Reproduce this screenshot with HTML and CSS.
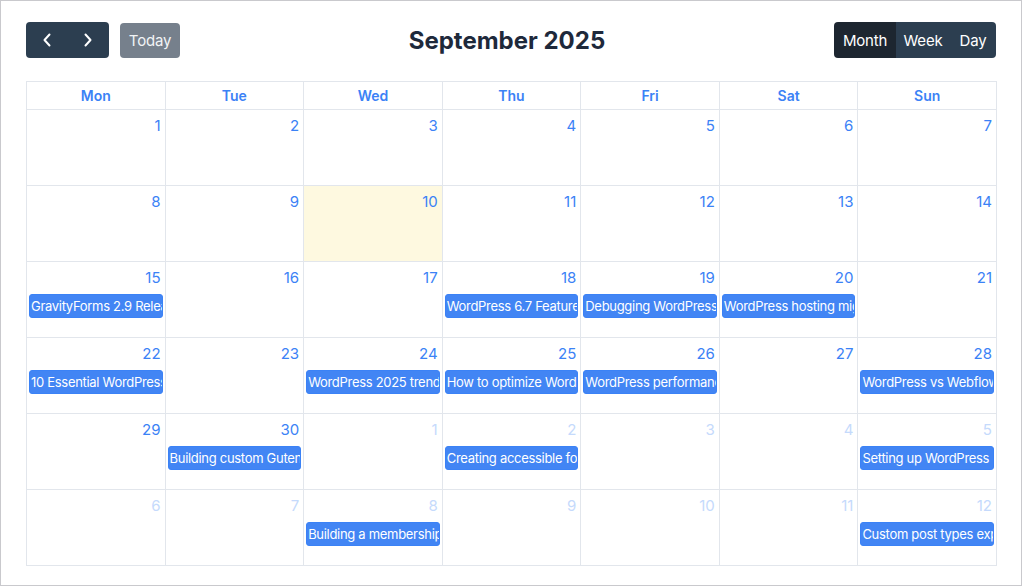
FILE: index.html
```html
<!DOCTYPE html>
<html lang="en">
<head>
<meta charset="utf-8">
<title>Calendar</title>
<link rel="stylesheet" href="styles.css">
</head>
<body>
<div class="frame">
  <div class="toolbar">
    <div class="left">
      <div class="btn-group">
        <button class="btn nav" aria-label="prev"><svg width="10" height="16" viewBox="0 0 10 16"><path d="M7.5 2.5 L2.5 8 L7.5 13.5" fill="none" stroke="#fff" stroke-width="2" stroke-linecap="round" stroke-linejoin="round"/></svg></button>
        <button class="btn nav" aria-label="next"><svg width="10" height="16" viewBox="0 0 10 16"><path d="M2.5 2.5 L7.5 8 L2.5 13.5" fill="none" stroke="#fff" stroke-width="2" stroke-linecap="round" stroke-linejoin="round"/></svg></button>
      </div>
      <button class="btn today">Today</button>
    </div>
    <h2 class="title">September 2025</h2>
    <div class="btn-group">
      <button class="btn view active">Month</button>
      <button class="btn view">Week</button>
      <button class="btn view">Day</button>
    </div>
  </div>
  <div class="grid">
    <div class="head">Mon</div><div class="head">Tue</div><div class="head">Wed</div><div class="head">Thu</div><div class="head">Fri</div><div class="head">Sat</div><div class="head">Sun</div>

    <div class="cell"><div class="num">1</div></div>
    <div class="cell"><div class="num">2</div></div>
    <div class="cell"><div class="num">3</div></div>
    <div class="cell"><div class="num">4</div></div>
    <div class="cell"><div class="num">5</div></div>
    <div class="cell"><div class="num">6</div></div>
    <div class="cell"><div class="num">7</div></div>

    <div class="cell"><div class="num">8</div></div>
    <div class="cell"><div class="num">9</div></div>
    <div class="cell today-cell"><div class="num">10</div></div>
    <div class="cell"><div class="num">11</div></div>
    <div class="cell"><div class="num">12</div></div>
    <div class="cell"><div class="num">13</div></div>
    <div class="cell"><div class="num">14</div></div>

    <div class="cell"><div class="num">15</div><div class="event">GravityForms 2.9 Release Notes</div></div>
    <div class="cell"><div class="num">16</div></div>
    <div class="cell"><div class="num">17</div></div>
    <div class="cell"><div class="num">18</div><div class="event">WordPress 6.7 Features</div></div>
    <div class="cell"><div class="num">19</div><div class="event">Debugging WordPress themes</div></div>
    <div class="cell"><div class="num">20</div><div class="event">WordPress hosting migration</div></div>
    <div class="cell"><div class="num">21</div></div>

    <div class="cell"><div class="num">22</div><div class="event">10 Essential WordPress Plugins</div></div>
    <div class="cell"><div class="num">23</div></div>
    <div class="cell"><div class="num">24</div><div class="event">WordPress 2025 trends</div></div>
    <div class="cell"><div class="num">25</div><div class="event">How to optimize WordPress</div></div>
    <div class="cell"><div class="num">26</div><div class="event">WordPress performance tips</div></div>
    <div class="cell"><div class="num">27</div></div>
    <div class="cell"><div class="num">28</div><div class="event">WordPress vs Webflow: comparison</div></div>

    <div class="cell"><div class="num">29</div></div>
    <div class="cell"><div class="num">30</div><div class="event">Building custom Gutenberg blocks</div></div>
    <div class="cell other"><div class="num">1</div></div>
    <div class="cell other"><div class="num">2</div><div class="event">Creating accessible forms</div></div>
    <div class="cell other"><div class="num">3</div></div>
    <div class="cell other"><div class="num">4</div></div>
    <div class="cell other"><div class="num">5</div><div class="event">Setting up WordPress multisite</div></div>

    <div class="cell other"><div class="num">6</div></div>
    <div class="cell other"><div class="num">7</div></div>
    <div class="cell other"><div class="num">8</div><div class="event">Building a membership site</div></div>
    <div class="cell other"><div class="num">9</div></div>
    <div class="cell other"><div class="num">10</div></div>
    <div class="cell other"><div class="num">11</div></div>
    <div class="cell other"><div class="num">12</div><div class="event">Custom post types explained</div></div>
  </div>
</div>
</body>
</html>
```

FILE: styles.css
```css
* { box-sizing: border-box; }
html, body { margin: 0; padding: 0; background: #fff; }
body { font-family: Inter, "Liberation Sans", Arial, sans-serif; }

.frame {
  width: 1022px;
  height: 586px;
  border: 1px solid #c9c9cd;
  padding: 21px 25px 0 25px;
  background: #fff;
}

.toolbar {
  display: flex;
  align-items: center;
  justify-content: space-between;
  height: 36px;
  margin-bottom: 23px;
}
.left { display: flex; align-items: center; gap: 11px; }

.btn-group { display: flex; border-radius: 4px; overflow: hidden; height: 36px; }

.btn {
  border: 0;
  margin: 0;
  font-family: inherit;
  font-size: 15px;
  letter-spacing: -0.2px;
  color: #fff;
  background: #2c3e50;
  height: 36px;
  padding: 0;
  display: flex;
  align-items: center;
  justify-content: center;
  cursor: pointer;
}
.nav { width: 41.5px; }
.nav svg { display: block; }
.today {
  width: 60px;
  height: 35px;
  border-radius: 4px;
  background: #76808c;
  color: #f1f3f5;
}
.view { padding: 0 10px; }
.view:nth-child(1) { width: 62px; }
.view:nth-child(2) { width: 54px; }
.view:nth-child(3) { width: 46px; }
.view.active { background: #1d2630; }

.title {
  margin: 0;
  font-size: 24px;
  font-weight: 700;
  color: #1e293b;
}

.grid {
  display: grid;
  grid-template-columns: repeat(7, 1fr);
  grid-template-rows: 28px repeat(6, 76px);
  width: 971px;
  border-top: 1px solid #e2e6ec;
  border-left: 1px solid #e2e6ec;
}
.head, .cell {
  border-right: 1px solid #e2e6ec;
  border-bottom: 1px solid #e2e6ec;
  min-width: 0;
}
.head {
  display: flex;
  align-items: center;
  justify-content: center;
  font-size: 14px;
  font-weight: 600;
  color: #3b82f6;
}
.cell { overflow: hidden; }
.today-cell { background: #fef9e0; }
.num {
  text-align: right;
  font-size: 15px;
  line-height: 20px;
  padding: 6px 4px 0 0;
  color: #3b82f6;
  height: 32px;
}
.other .num { color: #c5dafc; }
.event {
  margin: 0 2px;
  height: 24px;
  line-height: 22px;
  background: #4285f4;
  border: 1px solid #3b82f6;
  border-radius: 3px;
  color: #fff;
  font-size: 13px;
  letter-spacing: -0.3px;
  padding: 0 1px;
  white-space: nowrap;
  overflow: hidden;
  text-overflow: clip;
}
```
